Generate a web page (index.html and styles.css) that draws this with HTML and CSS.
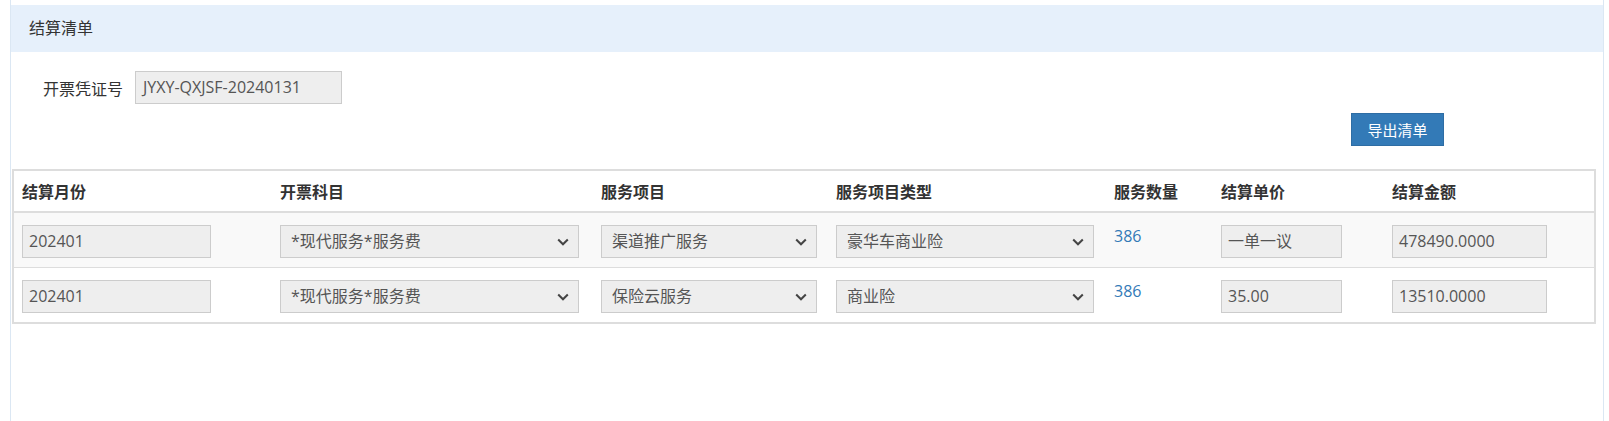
FILE: index.html
```html
<!DOCTYPE html>
<html lang="zh-CN">
<head>
<meta charset="utf-8">
<title>结算清单</title>
<link rel="stylesheet" href="styles.css">
</head>
<body>
<div class="panel">
  <div class="panel-heading">结算清单</div>
  <div class="form-row">
    <label class="form-label">开票凭证号</label>
    <div class="field voucher">JYXY-QXJSF-20240131</div>
  </div>
  <div class="action-row">
    <button class="btn-primary" type="button">导出清单</button>
  </div>
  <table class="list">
    <colgroup>
      <col class="c1"><col class="c2"><col class="c3"><col class="c4"><col class="c5"><col class="c6"><col class="c7">
    </colgroup>
    <thead>
      <tr>
        <th>结算月份</th><th>开票科目</th><th>服务项目</th><th>服务项目类型</th><th>服务数量</th><th>结算单价</th><th>结算金额</th>
      </tr>
    </thead>
    <tbody>
      <tr class="striped">
        <td><div class="field w1">202401</div></td>
        <td><div class="field select w2"><span>*现代服务*服务费</span><svg class="chev" viewBox="0 0 12 8" width="12" height="8"><path d="M1.2 1.5 L6 6.3 L10.8 1.5" fill="none" stroke="#444" stroke-width="2"/></svg></div></td>
        <td><div class="field select w3"><span>渠道推广服务</span><svg class="chev" viewBox="0 0 12 8" width="12" height="8"><path d="M1.2 1.5 L6 6.3 L10.8 1.5" fill="none" stroke="#444" stroke-width="2"/></svg></div></td>
        <td><div class="field select w4"><span>豪华车商业险</span><svg class="chev" viewBox="0 0 12 8" width="12" height="8"><path d="M1.2 1.5 L6 6.3 L10.8 1.5" fill="none" stroke="#444" stroke-width="2"/></svg></div></td>
        <td><span class="qty">386</span></td>
        <td><div class="field w6">一单一议</div></td>
        <td><div class="field w7">478490.0000</div></td>
      </tr>
      <tr>
        <td><div class="field w1">202401</div></td>
        <td><div class="field select w2"><span>*现代服务*服务费</span><svg class="chev" viewBox="0 0 12 8" width="12" height="8"><path d="M1.2 1.5 L6 6.3 L10.8 1.5" fill="none" stroke="#444" stroke-width="2"/></svg></div></td>
        <td><div class="field select w3"><span>保险云服务</span><svg class="chev" viewBox="0 0 12 8" width="12" height="8"><path d="M1.2 1.5 L6 6.3 L10.8 1.5" fill="none" stroke="#444" stroke-width="2"/></svg></div></td>
        <td><div class="field select w4"><span>商业险</span><svg class="chev" viewBox="0 0 12 8" width="12" height="8"><path d="M1.2 1.5 L6 6.3 L10.8 1.5" fill="none" stroke="#444" stroke-width="2"/></svg></div></td>
        <td><span class="qty">386</span></td>
        <td><div class="field w6">35.00</div></td>
        <td><div class="field w7">13510.0000</div></td>
      </tr>
    </tbody>
  </table>
</div>
</body>
</html>
```

FILE: styles.css
```css
html, body {
  margin: 0;
  padding: 0;
  height: 100%;
  background: #fff;
}
body {
  font-family: "Open Sans", "Noto Sans CJK SC", sans-serif;
  font-size: 16px;
  color: #333;
}
.panel {
  box-sizing: border-box;
  margin-left: 10px;
  width: 1594px;
  min-height: 100%;
  padding-top: 5px;
  border-left: 1px solid #dbe7f3;
  border-right: 1px solid #dbe7f3;
}
.panel-heading {
  height: 47px;
  line-height: 47px;
  background: #e6f0fb;
  padding-left: 18px;
  font-size: 16px;
  color: #333;
}
.form-row {
  display: flex;
  align-items: center;
  padding-left: 32px;
  margin-top: 19px;
  gap: 12px;
}
.form-label {
  font-size: 16px;
  color: #333;
}
.field {
  box-sizing: border-box;
  height: 33px;
  line-height: 31px;
  background: #eee;
  border: 1px solid #ccc;
  color: #555;
  padding-left: 6px;
  font-size: 16px;
  white-space: nowrap;
  overflow: hidden;
}
.voucher {
  width: 207px;
  padding-left: 7px;
}
.action-row {
  display: flex;
  justify-content: flex-end;
  padding-right: 159px;
  margin-top: 9px;
}
.btn-primary {
  box-sizing: border-box;
  width: 93px;
  height: 33px;
  background: #337ab7;
  border: 1px solid #2e6da4;
  color: #fff;
  font-family: "Noto Sans CJK SC", sans-serif;
  font-size: 15px;
  padding: 0;
  cursor: pointer;
}
.list {
  margin-top: 23px;
  margin-left: 1px;
  width: 1584px;
  table-layout: fixed;
  border-collapse: collapse;
  border: 2px solid #ddd;
}
.c1 { width: 259px; }
.c2 { width: 321px; }
.c3 { width: 235px; }
.c4 { width: 278px; }
.c5 { width: 107px; }
.c6 { width: 171px; }
.c7 { width: auto; }
.list th {
  text-align: left;
  font-weight: bold;
  font-family: "Noto Sans CJK SC", sans-serif;
  font-size: 16px;
  color: #333;
  padding: 9px 8px 8px;
  line-height: 23px;
  border-bottom: 2px solid #ddd;
}
.list td {
  padding: 8px 8px 9px;
  vertical-align: top;
  border-top: 1px solid #ddd;
}
.list tr.striped td {
  background: #f9f9f9;
}
.list td .field {
  margin-top: 4px;
}
.select {
  display: flex;
  align-items: center;
  justify-content: space-between;
  padding-left: 10px;
  padding-right: 9px;
}
.chev {
  flex: none;
}
.w1 { width: 189px; }
.w2 { width: 299px; }
.w3 { width: 216px; }
.w4 { width: 258px; }
.w6 { width: 121px; }
.w7 { width: 155px; }
.qty {
  display: block;
  padding-top: 5px;
  line-height: 20px;
  color: #337ab7;
  font-size: 16px;
}
```
